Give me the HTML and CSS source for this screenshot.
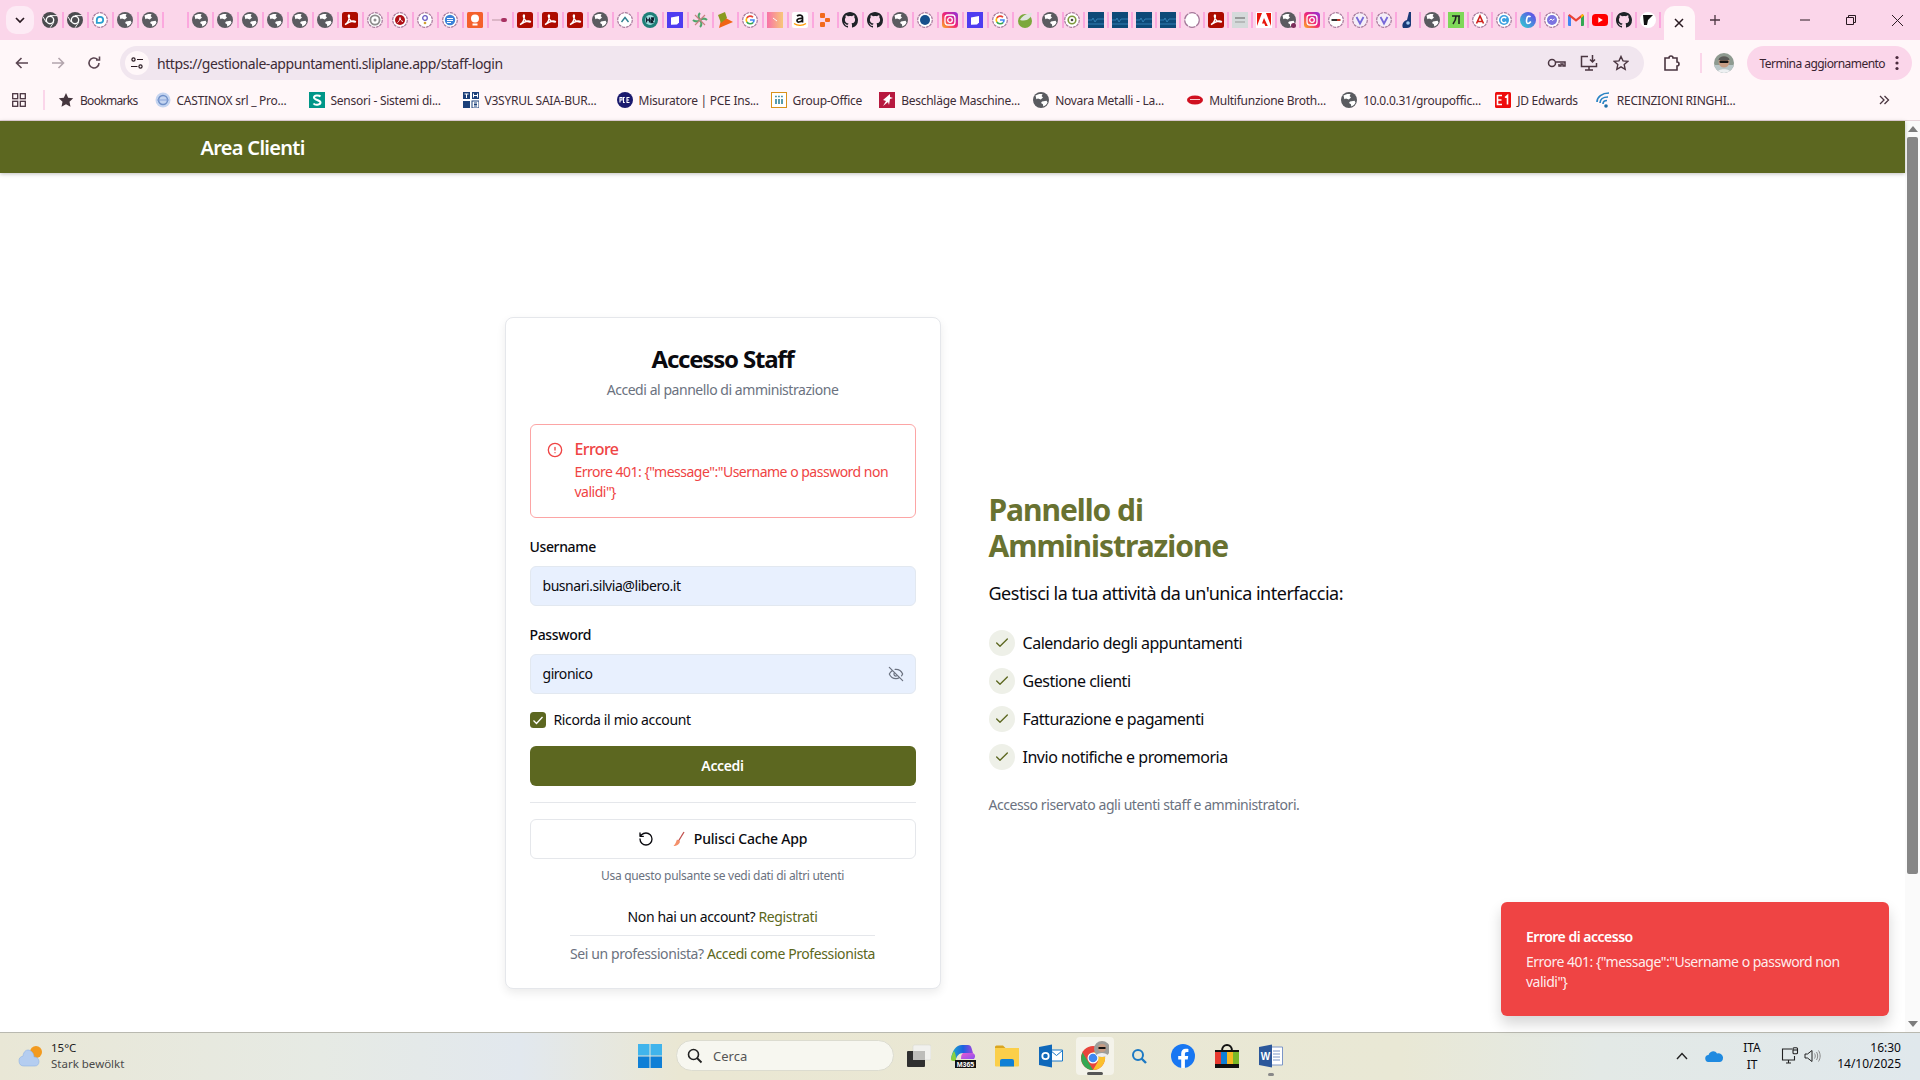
FILE: index.html
```html
<!DOCTYPE html>
<html lang="it">
<head>
    <meta charset="UTF-8">
    <title>Accesso Staff</title>
    <link rel="stylesheet" href="styles.css">
</head>
<body>
    <!-- favicons used by tab strip and bookmarks -->
    <svg class="sprite" xmlns="http://www.w3.org/2000/svg">
        <symbol id="f-globe" viewBox="0 0 16 16"><circle cx="8" cy="8" r="8" fill="#5a5b60"/><path fill="#fff" d="M2.5 3.6C4.6 2 7.2 1.5 9.6 2.2L8.6 4 10 5.6 7.8 7.4 5 6.4 3.4 7.2zM9 9.4l4.6-.6.9 1.6c-.7 1.8-2.2 3.3-4.2 4l-.4-2.2L8 11z"/></symbol>
        <symbol id="f-chrome" viewBox="0 0 16 16"><circle cx="8" cy="8" r="8" fill="#4b4b4f"/><circle cx="8" cy="8" r="4.4" fill="#fff"/><circle cx="8" cy="8" r="3" fill="#4b4b4f"/><path stroke="#fff" stroke-width=".9" d="M8 3.6h7M4.2 10.2.9 4.6M11.8 10.2 8 15.8"/></symbol>
        <symbol id="f-pdf" viewBox="0 0 16 16"><rect width="16" height="16" rx="2.5" fill="#ad0b00"/><path fill="none" stroke="#fff" stroke-width="1.4" d="M3 12.6c2.4-1.4 4.2-4.6 4.4-8.6.1-1.600-1.300-1.400-1 .3.500 3 2.900 5.500 6.600 5.700 1.300 0-.1-1.500-2.300-1-2.400.5-4.800 1.600-7.700 3.600z"/></symbol>
        <symbol id="f-ring-blue" viewBox="0 0 16 16"><circle cx="8" cy="8" r="7.300" fill="#fff" stroke="#a5799a" stroke-width="1.200" stroke-dasharray="3 .8"/><path fill="none" stroke="#2a9fd0" stroke-width="1.800" d="M4.800 10.800V8a3.200 3.200 0 1 1 6.400 0c0 2-1.500 2.800-3.200 2.800z"/></symbol>
        <symbol id="f-ring-gray" viewBox="0 0 16 16"><circle cx="8" cy="8" r="7.300" fill="#fff" stroke="#a5799a" stroke-width="1.200" stroke-dasharray="3 .8"/><circle cx="8" cy="8" r="4.600" fill="none" stroke="#8d8d8d" stroke-width="1.800"/><circle cx="8" cy="8" r="1.500" fill="#8d8d8d"/></symbol>
        <symbol id="f-ring-red" viewBox="0 0 16 16"><circle cx="8" cy="8" r="7.300" fill="#fff" stroke="#a5799a" stroke-width="1.200" stroke-dasharray="3 .8"/><circle cx="8" cy="8" r="5" fill="#b01016"/><path fill="none" stroke="#fff" d="M5.500 10.500C7 9.500 8 7.500 8 5.500c0 2 1.200 3.600 3 4"/></symbol>
        <symbol id="f-ring-purple" viewBox="0 0 16 16"><circle cx="8" cy="8" r="7.300" fill="#fff" stroke="#a5799a" stroke-width="1.200" stroke-dasharray="3 .8"/><circle cx="8" cy="6" r="2.300" fill="none" stroke="#6a5bc0" stroke-width="1.300"/><circle cx="8" cy="11" r="1.300" fill="#d0a030"/></symbol>
        <symbol id="f-ring-lines" viewBox="0 0 16 16"><circle cx="8" cy="8" r="7.300" fill="#fff" stroke="#a5799a" stroke-width="1.200" stroke-dasharray="3 .8"/><circle cx="8" cy="8" r="5.200" fill="#3b82d8"/><path stroke="#fff" d="M5 6.500h6M5 8.500h6M5 10.500h4"/></symbol>
        <symbol id="f-lamp" viewBox="0 0 16 16"><rect width="16" height="16" rx="1.500" fill="#f4602c"/><circle cx="8" cy="6.500" r="4" fill="#fff"/><rect x="5.500" y="11.500" width="5" height="2" fill="#fff"/></symbol>
        <symbol id="f-dash" viewBox="0 0 16 16"><path stroke="#c9a0b0" stroke-width="1.200" d="M0 8h9"/><rect x="9" y="6" width="6" height="4" rx="2" fill="#a83262"/></symbol>
        <symbol id="f-ring-teal" viewBox="0 0 16 16"><circle cx="8" cy="8" r="7.300" fill="#fff" stroke="#a5799a" stroke-width="1.200" stroke-dasharray="3 .8"/><path fill="none" stroke="#2f7f90" stroke-width="1.400" d="M4.500 10 8 5.500l3.500 4.500"/></symbol>
        <symbol id="f-h2" viewBox="0 0 16 16"><circle cx="8" cy="8" r="8" fill="#1f7f78"/><circle cx="8" cy="8" r="5" fill="#9fdfe0"/><path stroke="#123" stroke-width="1.300" d="M4.500 5.500v5M7.500 5.500v5M4.500 8h3M9 6h2.500v2H9v2.500h2.500"/></symbol>
        <symbol id="f-note" viewBox="0 0 16 16"><rect width="16" height="16" fill="#4f3df0"/><path fill="#fff" d="M4 5.500 12 4v6.500l-2 2-6 .3z"/></symbol>
        <symbol id="f-wheel" viewBox="0 0 16 16"><g fill="none" stroke="#4fa56b" stroke-width="2"><path d="M8 8C6 5 6 3 8 1M8 8c3-2 5-2 7 0M8 8c2 3 2 5 0 7M8 8C5 10 3 10 1 8"/></g><g fill="none" stroke="#c98080" stroke-width="1.200"><path d="M8 8 3 3M8 8l5-5M8 8l5 5M8 8l-5 5"/></g></symbol>
        <symbol id="f-orange" viewBox="0 0 16 16"><path fill="#f06414" d="M5 4 16 10 2 16z"/><path fill="#8a9a20" d="M1 3 8 0l2 6-6 5z"/></symbol>
        <symbol id="f-g" viewBox="0 0 16 16"><circle cx="8" cy="8" r="7.300" fill="#fff" stroke="#a5799a" stroke-width="1.200" stroke-dasharray="3 .8"/><path fill="none" stroke="#ea4335" stroke-width="1.600" d="M11 5.300A4 4 0 0 0 4.800 6"/><path fill="none" stroke="#fbbc05" stroke-width="1.600" d="M4.800 6a4 4 0 0 0 0 4"/><path fill="none" stroke="#34a853" stroke-width="1.600" d="M4.800 10a4 4 0 0 0 6.400.4"/><path fill="none" stroke="#4285f4" stroke-width="1.600" d="M11.200 10.400A4 4 0 0 0 12 8H8"/></symbol>
        <symbol id="f-pink" viewBox="0 0 16 16"><defs><linearGradient id="g-pink" x1="0" y1="0" x2="1" y2="0"><stop offset="0" stop-color="#f872a8"/><stop offset="1" stop-color="#f8c878"/></linearGradient></defs><rect width="16" height="16" fill="url(#g-pink)"/><path stroke="#fff" d="M6 6l4 3"/></symbol>
        <symbol id="f-dots" viewBox="0 0 16 16"><g fill="#f26b1d"><rect x="3" y="1" width="5" height="5" rx="1"/><rect x="8" y="6" width="5" height="4" rx="1"/><rect x="3" y="10" width="5" height="5" rx="1"/></g></symbol>
        <symbol id="f-github" viewBox="0 0 16 16"><path fill="#1f2328" d="M8 0C3.580 0 0 3.580 0 8c0 3.540 2.290 6.530 5.470 7.590.4.070.55-.17.55-.38v-1.340c-2.230.48-2.700-1.070-2.700-1.070-.36-.92-.89-1.170-.89-1.170-.73-.5.050-.49.050-.49.8.060 1.230.83 1.230.83.710 1.220 1.870.87 2.330.66.070-.52.280-.87.510-1.070-1.780-.2-3.640-.89-3.640-3.950 0-.87.31-1.590.82-2.150-.08-.2-.36-1.020.08-2.120 0 0 .67-.21 2.200.82A7.600 7.600 0 0 1 8 3.900c.68 0 1.360.09 2 .27 1.530-1.040 2.200-.82 2.200-.82.44 1.100.16 1.920.08 2.120.51.560.82 1.270.82 2.150 0 3.070-1.870 3.750-3.650 3.950.29.250.54.730.54 1.480v2.160c0 .21.150.46.550.38A8.010 8.010 0 0 0 16 8c0-4.420-3.580-8-8-8z"/></symbol>
        <symbol id="f-ring-navy" viewBox="0 0 16 16"><circle cx="8" cy="8" r="7.300" fill="#fff" stroke="#a5799a" stroke-width="1.200" stroke-dasharray="3 .8"/><circle cx="8" cy="8" r="5" fill="#16508c"/></symbol>
        <symbol id="f-insta" viewBox="0 0 16 16"><defs><linearGradient id="g-insta" x1="0" y1="1" x2="1" y2="0"><stop offset="0" stop-color="#fdb01e"/><stop offset=".5" stop-color="#f0257a"/><stop offset="1" stop-color="#8a32e0"/></linearGradient></defs><rect width="16" height="16" rx="3.500" fill="url(#g-insta)"/><rect x="3" y="3" width="10" height="10" rx="3" fill="none" stroke="#fff" stroke-width="1.300"/><circle cx="8" cy="8" r="2.300" fill="none" stroke="#fff" stroke-width="1.300"/></symbol>
        <symbol id="f-blob" viewBox="0 0 16 16"><circle cx="8" cy="9" r="7" fill="#7ca83c"/><path fill="#dfe5df" d="M3 8c2-4 7-7 12-7-1 5-5 9-12 7z"/></symbol>
        <symbol id="f-ring-green" viewBox="0 0 16 16"><circle cx="8" cy="8" r="7.300" fill="#fff" stroke="#a5799a" stroke-width="1.200" stroke-dasharray="3 .8"/><circle cx="8" cy="8" r="3.800" fill="none" stroke="#7c9a3c" stroke-width="1.600"/><circle cx="8" cy="8" r="1.300" fill="#444"/></symbol>
        <symbol id="f-tile" viewBox="0 0 16 16"><rect width="16" height="16" fill="#0d4a78"/><path fill="none" stroke="#3a8cc0" stroke-width=".8" d="M0 8h4l1-2 2 4 2-3h7M0 12h16"/></symbol>
        <symbol id="f-ring-empty" viewBox="0 0 16 16"><circle cx="8" cy="8" r="7.300" fill="#fff" stroke="#a5799a" stroke-width="1.200" stroke-dasharray="7 .8"/></symbol>
        <symbol id="f-oslo" viewBox="0 0 16 16"><rect width="16" height="16" fill="#d5dadb"/><path stroke="#777" stroke-width="1.300" d="M3 6h10"/><path stroke="#999" d="M3 10h10"/></symbol>
        <symbol id="f-adobe" viewBox="0 0 16 16"><rect width="16" height="16" fill="#fff"/><path fill="#e8160c" d="M1 1h5L1 14zM10 1h5v13zM8 6l3.800 8H9.300l-1-2.600H6z"/></symbol>
        <symbol id="f-globe-dot" viewBox="0 0 16 16"><use href="#f-globe"/><circle cx="13.500" cy="13.500" r="2.500" fill="#7b2d5b"/></symbol>
        <symbol id="f-ring-dash" viewBox="0 0 16 16"><circle cx="8" cy="8" r="7.300" fill="#fff" stroke="#a5799a" stroke-width="1.200" stroke-dasharray="3 .8"/><path stroke="#333" stroke-width="2" d="M3.500 8H9"/><path stroke="#c0392b" stroke-width="2" d="M9 8h3.500"/></symbol>
        <symbol id="f-ring-v" viewBox="0 0 16 16"><circle cx="8" cy="8" r="7.300" fill="#f5eef8" stroke="#a5799a" stroke-width="1.200" stroke-dasharray="3 .8"/><path fill="none" stroke="#7668d8" stroke-width="1.800" d="M4.500 5 8 11.500 11.500 5"/></symbol>
        <symbol id="f-tune" viewBox="0 0 16 16"><path fill="#1a3a78" d="M3 16c-1.500-3 0-7 4-8l2-8h2v13c0 2-2 3-4 3z"/><circle cx="8" cy="11" r="1.800" fill="#9fc8f0"/></symbol>
        <symbol id="f-green" viewBox="0 0 16 16"><rect width="16" height="16" fill="#7fd858"/><path fill="none" stroke="#222" stroke-width="1.600" d="M4 4h8M8 4c0 3-1.500 6-3 8M11 4v8"/></symbol>
        <symbol id="f-ring-adobe" viewBox="0 0 16 16"><circle cx="8" cy="8" r="7.300" fill="#fff" stroke="#a5799a" stroke-width="1.200" stroke-dasharray="3 .8"/><path fill="none" stroke="#d0211c" stroke-width="1.600" d="M4.500 11.500 8 4l3.500 7.500M6 9.500h4"/></symbol>
        <symbol id="f-ring-c" viewBox="0 0 16 16"><circle cx="8" cy="8" r="7.300" fill="#fff" stroke="#a5799a" stroke-width="1.200" stroke-dasharray="3 .8"/><circle cx="8" cy="8" r="5" fill="#3aa0e0"/><path fill="none" stroke="#fff" stroke-width="1.400" d="M10.200 6.200a2.800 2.800 0 1 0 0 3.600"/></symbol>
        <symbol id="f-canva" viewBox="0 0 16 16"><defs><linearGradient id="g-canva" x1="0" y1="1" x2="1" y2="0"><stop offset="0" stop-color="#2bd4d0"/><stop offset="1" stop-color="#6a3ce8"/></linearGradient></defs><circle cx="8" cy="8" r="8" fill="url(#g-canva)"/><path fill="none" stroke="#fff" stroke-width="1.600" d="M10.500 5a2 2 0 0 0-3.500 1c-1 3-.5 5.500 1 5.500 1 0 2-.8 2.800-2"/></symbol>
        <symbol id="f-ring-msg" viewBox="0 0 16 16"><circle cx="8" cy="8" r="7.300" fill="#fff" stroke="#a5799a" stroke-width="1.200" stroke-dasharray="3 .8"/><circle cx="8" cy="8" r="5" fill="#7c74e0"/><path fill="none" stroke="#fff" d="M5.500 8.500 7 7l1.500 1.300L10.500 7"/></symbol>
        <symbol id="f-gmail" viewBox="0 0 16 16"><path fill="#4285f4" d="M0 3.500h3V14H1a1 1 0 0 1-1-1z"/><path fill="#34a853" d="M13 3.500h3V13a1 1 0 0 1-1 1h-2z"/><path fill="#ea4335" d="M0 3.500 1.500 2 8 7l6.500-5L16 3.500 8 9.800z"/><path fill="#fbbc05" d="M13 3.300 14.500 2 16 3.500 13 6z"/></symbol>
        <symbol id="f-yt" viewBox="0 0 16 16"><rect y="2" width="16" height="12" rx="3.500" fill="#f00"/><path fill="#fff" d="m6.300 5.300 4.500 2.700-4.500 2.700z"/></symbol>
        <symbol id="f-black" viewBox="0 0 16 16"><circle cx="8" cy="8" r="8" fill="#fff"/><path fill="#111" d="M3 3h10L8 8l-1 5H4z"/></symbol>
        <symbol id="f-castinox" viewBox="0 0 16 16"><circle cx="8" cy="8" r="7.500" fill="#c4d4f0"/><circle cx="8" cy="8" r="4.500" fill="none" stroke="#7090c8" stroke-width="1.500"/><path stroke="#8aa4d8" d="M2 8h12"/></symbol>
        <symbol id="f-the" viewBox="0 0 16 16"><rect width="16" height="16" fill="#fff"/><path fill="#1b3f7a" d="M0 0h7v7H0zM9 0h7v7H9zM0 9h7v7H0z"/><rect x="9" y="9" width="7" height="7" fill="none" stroke="#1b3f7a"/><path stroke="#fff" d="M1.500 2h4M3.500 2v4M10.500 1.500v4M14.500 1.500v4M10.500 3.500h4"/><path stroke="#1b3f7a" d="M11 11h3M11 12.500h3M11 14h3"/></symbol>
        <symbol id="f-pce" viewBox="0 0 16 16"><circle cx="8" cy="8" r="8" fill="#1a1a6e"/><path stroke="#fff" stroke-width="1.100" fill="none" d="M3 10.500V5.500h2v2.500H3M7.800 5.500H6.500v5h1.300M12.500 5.500h-2.500v5h2.500M10 8h2"/></symbol>
        <symbol id="f-group" viewBox="0 0 16 16"><rect x=".5" y=".5" width="15" height="15" fill="#fff" stroke="#d8921c"/><path stroke="#1f7c94" stroke-width="1.500" d="M5 7v5M8 7v5M11 7v5"/><path stroke="#1f7c94" stroke-width="1.500" stroke-dasharray="1.500 1.500" d="M4.200 4.500h7.600"/></symbol>
        <symbol id="f-besch" viewBox="0 0 16 16"><rect width="16" height="16" fill="#b7193f"/><path fill="#fff" d="m11 2-7 6 3 1-3 5 5-4 1 3 1-6 3-1-3-1z"/></symbol>
        <symbol id="f-multi" viewBox="0 0 16 16"><ellipse cx="8" cy="8" rx="8" ry="4.500" fill="#d01020"/><path stroke="#fff" stroke-width=".8" d="M3 7.500h10"/></symbol>
        <symbol id="f-e1" viewBox="0 0 16 16"><rect width="16" height="16" rx="1.500" fill="#ee0c0c"/><path fill="none" stroke="#fff" stroke-width="1.600" d="M7 3.500H2.500v9H7M2.500 8h4M10 5.500l2.500-2v9"/></symbol>
        <symbol id="f-swirl" viewBox="0 0 16 16"><g fill="none" stroke="#2a84c4" stroke-width="1.700"><path d="M2 10C2 5 7 1 14 1M5 11c0-3.500 3-6 8-6M8 12c0-2 1.500-3.500 4-3.500"/></g><circle cx="11" cy="14" r="1.800" fill="#1f6fa8"/></symbol>
    </svg>

    <div class="tabstrip">
        <button class="tab-search"><svg viewBox="0 0 12 12" width="12" height="12"><path d="M2 4l4 4 4-4" fill="none" stroke="#2a1a22" stroke-width="1.700"/></svg></button>
        <div class="tabs">
            <span class="tab"><svg class="fav"><use href="#f-chrome"/></svg></span>
            <span class="tab"><svg class="fav"><use href="#f-chrome"/></svg></span>
            <span class="tab"><svg class="fav"><use href="#f-ring-blue"/></svg></span>
            <span class="tab"><svg class="fav"><use href="#f-globe"/></svg></span>
            <span class="tab"><svg class="fav"><use href="#f-globe"/></svg></span>
            <span class="tab"></span>
            <span class="tab"><svg class="fav"><use href="#f-globe"/></svg></span>
            <span class="tab"><svg class="fav"><use href="#f-globe"/></svg></span>
            <span class="tab"><svg class="fav"><use href="#f-globe"/></svg></span>
            <span class="tab"><svg class="fav"><use href="#f-globe"/></svg></span>
            <span class="tab"><svg class="fav"><use href="#f-globe"/></svg></span>
            <span class="tab"><svg class="fav"><use href="#f-globe"/></svg></span>
            <span class="tab"><svg class="fav"><use href="#f-pdf"/></svg></span>
            <span class="tab"><svg class="fav"><use href="#f-ring-gray"/></svg></span>
            <span class="tab"><svg class="fav"><use href="#f-ring-red"/></svg></span>
            <span class="tab"><svg class="fav"><use href="#f-ring-purple"/></svg></span>
            <span class="tab"><svg class="fav"><use href="#f-ring-lines"/></svg></span>
            <span class="tab"><svg class="fav"><use href="#f-lamp"/></svg></span>
            <span class="tab"><svg class="fav"><use href="#f-dash"/></svg></span>
            <span class="tab"><svg class="fav"><use href="#f-pdf"/></svg></span>
            <span class="tab"><svg class="fav"><use href="#f-pdf"/></svg></span>
            <span class="tab"><svg class="fav"><use href="#f-pdf"/></svg></span>
            <span class="tab"><svg class="fav"><use href="#f-globe"/></svg></span>
            <span class="tab"><svg class="fav"><use href="#f-ring-teal"/></svg></span>
            <span class="tab"><svg class="fav"><use href="#f-h2"/></svg></span>
            <span class="tab"><svg class="fav"><use href="#f-note"/></svg></span>
            <span class="tab"><svg class="fav"><use href="#f-wheel"/></svg></span>
            <span class="tab"><svg class="fav"><use href="#f-orange"/></svg></span>
            <span class="tab"><svg class="fav"><use href="#f-g"/></svg></span>
            <span class="tab"><svg class="fav"><use href="#f-pink"/></svg></span>
            <span class="tab"><svg class="fav" viewBox="0 0 16 16"><rect width="16" height="16" rx="2" fill="#fff"/><path fill="none" stroke="#111" stroke-width="1.700" d="M5 4.200c1.500-1.500 5-1.500 5.500.8v5.500M10.500 6.500c-3-.2-5.500.2-5.500 2.100s3.500 2 5.500-.3"/><path fill="none" stroke="#f90" stroke-width="1.300" d="M2 11.500c3.500 2.500 8.500 2.500 12 0"/></svg></span>
            <span class="tab"><svg class="fav"><use href="#f-dots"/></svg></span>
            <span class="tab"><svg class="fav"><use href="#f-github"/></svg></span>
            <span class="tab"><svg class="fav"><use href="#f-github"/></svg></span>
            <span class="tab"><svg class="fav"><use href="#f-globe"/></svg></span>
            <span class="tab"><svg class="fav"><use href="#f-ring-navy"/></svg></span>
            <span class="tab"><svg class="fav"><use href="#f-insta"/></svg></span>
            <span class="tab"><svg class="fav"><use href="#f-note"/></svg></span>
            <span class="tab"><svg class="fav"><use href="#f-g"/></svg></span>
            <span class="tab"><svg class="fav"><use href="#f-blob"/></svg></span>
            <span class="tab"><svg class="fav"><use href="#f-globe"/></svg></span>
            <span class="tab tab-small"><svg class="fav"><use href="#f-ring-green"/></svg></span>
            <span class="tab tab-small"><svg class="fav"><use href="#f-tile"/></svg></span>
            <span class="tab tab-small"><svg class="fav"><use href="#f-tile"/></svg></span>
            <span class="tab tab-small"><svg class="fav"><use href="#f-tile"/></svg></span>
            <span class="tab tab-small"><svg class="fav"><use href="#f-tile"/></svg></span>
            <span class="tab tab-small"><svg class="fav"><use href="#f-ring-empty"/></svg></span>
            <span class="tab tab-small"><svg class="fav"><use href="#f-pdf"/></svg></span>
            <span class="tab tab-small"><svg class="fav"><use href="#f-oslo"/></svg></span>
            <span class="tab tab-small"><svg class="fav"><use href="#f-adobe"/></svg></span>
            <span class="tab tab-small"><svg class="fav"><use href="#f-globe-dot"/></svg></span>
            <span class="tab tab-small"><svg class="fav"><use href="#f-insta"/></svg></span>
            <span class="tab tab-small"><svg class="fav"><use href="#f-ring-dash"/></svg></span>
            <span class="tab tab-small"><svg class="fav"><use href="#f-ring-v"/></svg></span>
            <span class="tab tab-small"><svg class="fav"><use href="#f-ring-v"/></svg></span>
            <span class="tab tab-small"><svg class="fav"><use href="#f-tune"/></svg></span>
            <span class="tab tab-small"><svg class="fav"><use href="#f-globe"/></svg></span>
            <span class="tab tab-small"><svg class="fav"><use href="#f-green"/></svg></span>
            <span class="tab tab-small"><svg class="fav"><use href="#f-ring-adobe"/></svg></span>
            <span class="tab tab-small"><svg class="fav"><use href="#f-ring-c"/></svg></span>
            <span class="tab tab-small"><svg class="fav"><use href="#f-canva"/></svg></span>
            <span class="tab tab-small"><svg class="fav"><use href="#f-ring-msg"/></svg></span>
            <span class="tab tab-small"><svg class="fav"><use href="#f-gmail"/></svg></span>
            <span class="tab tab-small"><svg class="fav"><use href="#f-yt"/></svg></span>
            <span class="tab tab-small"><svg class="fav"><use href="#f-github"/></svg></span>
            <span class="tab tab-small"><svg class="fav"><use href="#f-black"/></svg></span>
        </div>
        <div class="tab-active"><svg viewBox="0 0 10 10" width="10" height="10"><path d="M1 1l8 8M9 1l-8 8" stroke="#2a1a22" stroke-width="1.500"/></svg></div>
        <svg class="tab-new" viewBox="0 0 12 12" width="12" height="12"><path d="M6 1v10M1 6h10" stroke="#4a3540" stroke-width="1.300"/></svg>
        <div class="win-controls">
            <span><svg viewBox="0 0 10 10" width="10" height="10"><path d="M0 5h10" stroke="#2a1a22"/></svg></span>
            <span><svg viewBox="0 0 10 10" width="10" height="10"><path d="M.5 2.500h7v7h-7zM2.500 2.500v-2h7v7h-2" fill="none" stroke="#2a1a22"/></svg></span>
            <span><svg viewBox="0 0 10 10" width="11" height="11"><path d="M0 0l10 10M10 0L0 10" stroke="#2a1a22" stroke-width=".9"/></svg></span>
        </div>
    </div>

    <div class="toolbar">
        <span class="tool-btn"><svg viewBox="0 0 16 16" width="16" height="16"><path d="M14 8H2.500M7.500 3l-5 5 5 5" fill="none" stroke="#5b4652" stroke-width="1.600"/></svg></span>
        <span class="tool-btn"><svg viewBox="0 0 16 16" width="16" height="16"><path d="M2 8h11.500M8.500 3l5 5-5 5" fill="none" stroke="#b3a5ad" stroke-width="1.600"/></svg></span>
        <span class="tool-btn"><svg viewBox="0 0 16 16" width="16" height="16"><path d="M13 8a5 5 0 1 1-1.600-3.700M13.500 1.500v3.500H10" fill="none" stroke="#5b4652" stroke-width="1.600"/></svg></span>
        <div class="omnibox">
            <span class="site-info"><svg viewBox="0 0 14 14" width="14" height="14"><g fill="none" stroke="#2a1a22" stroke-width="1.200"><circle cx="3.500" cy="3.500" r="1.600"/><circle cx="10.500" cy="10.500" r="1.600"/><path d="M7 3.500h6M1 10.500h6.500"/></g></svg></span>
            <span class="url">https://gestionale-appuntamenti.sliplane.app/staff-login</span>
            <svg class="omni-icon" viewBox="0 0 20 14" width="20" height="14"><g fill="none" stroke="#4a3540" stroke-width="1.500"><circle cx="5" cy="7" r="3.500"/><path d="M8.500 6h9.500v4h-2V8h-2v2h-2V8"/></g></svg>
            <svg class="omni-icon" viewBox="0 0 18 18" width="18" height="18"><g fill="none" stroke="#4a3540" stroke-width="1.500"><path d="M8 2.500H1.500v10h15V9M5 16h8M9 12.500V16M12.500 1v6.500M10 5.500l2.500 2.500L15 5.500"/></g></svg>
            <svg class="omni-icon omni-star" viewBox="0 0 16 16" width="16" height="16"><path d="M8 1.500l2 4.400 4.700.5-3.500 3.200 1 4.700L8 11.900l-4.200 2.400 1-4.700L1.300 6.400 6 5.900z" fill="none" stroke="#4a3540" stroke-width="1.400"/></svg>
        </div>
        <span class="ext-btn"><svg viewBox="0 0 18 18" width="18" height="18"><path d="M2 4h4a2 2 0 0 1 4 0h4v4a2 2 0 0 1 0 4v4H2z" fill="none" stroke="#4a3540" stroke-width="1.600"/></svg></span>
        <span class="tool-sep"></span>
        <svg class="avatar" viewBox="0 0 20 20" width="20" height="20"><clipPath id="avatar-clip"><circle cx="10" cy="10" r="10"/></clipPath><g clip-path="url(#avatar-clip)"><rect width="20" height="20" fill="#8e9a90"/><path fill="#b9c6c8" d="M0 12h20v8H0z"/><circle cx="10" cy="9" r="5.500" fill="#c59c84"/><path fill="#5a5a58" d="M4.500 7C5 2 15 2 15.500 7z"/><rect x="5.500" y="7.500" width="9" height="2.500" rx="1" fill="#111"/><path fill="#eef0f2" d="M3 20c0-5 14-5 14 0z"/></g></svg>
        <span class="update-pill">Termina aggiornamento<svg viewBox="0 0 4 16" width="4" height="16"><g fill="#4a2a3c"><circle cx="2" cy="2.500" r="1.600"/><circle cx="2" cy="8" r="1.600"/><circle cx="2" cy="13.500" r="1.600"/></g></svg></span>
    </div>

    <div class="bookmarks">
        <span class="apps-btn"><svg viewBox="0 0 14 14" width="14" height="14"><g fill="none" stroke="#4a3540" stroke-width="1.300"><rect x=".7" y=".7" width="5" height="5"/><rect x="8.300" y=".7" width="5" height="5"/><rect x=".7" y="8.300" width="5" height="5"/><rect x="8.300" y="8.300" width="5" height="5"/></g></svg></span>
        <span class="tool-sep bm-sep"></span>
        <span class="bm bm-folder"><svg class="fav" viewBox="0 0 16 16"><path fill="#45363e" d="M8 1l2.200 4.700 5 .6-3.700 3.400 1 5L8 12.200l-4.500 2.500 1-5L.8 6.300l5-.6z"/></svg>Bookmarks</span>
        <span class="bm bm-long"><svg class="fav"><use href="#f-castinox"/></svg>CASTINOX srl _ Pro...</span>
        <span class="bm bm-long"><svg class="fav" viewBox="0 0 16 16"><rect width="16" height="16" fill="#009688"/><path fill="none" stroke="#fff" stroke-width="2" d="M11.500 4.500C10 2.800 5 3 5 5.500S11.500 8 11.500 10.500 6 13.500 4.500 11.500"/></svg>Sensori - Sistemi di...</span>
        <span class="bm bm-long"><svg class="fav"><use href="#f-the"/></svg>V3SYRUL SAIA-BUR...</span>
        <span class="bm bm-long"><svg class="fav"><use href="#f-pce"/></svg>Misuratore | PCE Ins...</span>
        <span class="bm"><svg class="fav"><use href="#f-group"/></svg>Group-Office</span>
        <span class="bm bm-long"><svg class="fav"><use href="#f-besch"/></svg>Beschläge Maschine...</span>
        <span class="bm bm-long"><svg class="fav"><use href="#f-globe"/></svg>Novara Metalli - La...</span>
        <span class="bm bm-long"><svg class="fav"><use href="#f-multi"/></svg>Multifunzione Broth...</span>
        <span class="bm bm-long"><svg class="fav"><use href="#f-globe"/></svg>10.0.0.31/groupoffic...</span>
        <span class="bm"><svg class="fav"><use href="#f-e1"/></svg>JD Edwards</span>
        <span class="bm"><svg class="fav"><use href="#f-swirl"/></svg>RECINZIONI RINGHI...</span>
        <svg class="bm-more" viewBox="0 0 12 12" width="12" height="12"><path d="M2 2l4 4-4 4M6.500 2l4 4-4 4" fill="none" stroke="#4a3540" stroke-width="1.300"/></svg>
    </div>

    <div class="viewport">
        <div class="page">
            <header class="site-header">Area Clienti</header>
            <main class="login-grid">
                <section class="card">
                    <h1>Accesso Staff</h1>
                    <p class="subtitle">Accedi al pannello di amministrazione</p>

                    <div class="alert">
                        <svg class="icon" viewBox="0 0 24 24"><circle cx="12" cy="12" r="10"/><path d="M12 8v4M12 16h.01"/></svg>
                        <div>
                            <div class="alert-title">Errore</div>
                            <div class="alert-text">Errore 401: {"message":"Username o password non validi"}</div>
                        </div>
                    </div>

                    <label class="field-label">Username</label>
                    <div class="input">busnari.silvia@libero.it</div>

                    <label class="field-label field-gap">Password</label>
                    <div class="input">gironico
                        <svg class="icon eye" viewBox="0 0 24 24"><path d="M9.880 9.880a3 3 0 1 0 4.240 4.240M10.730 5.080A10.430 10.430 0 0 1 12 5c7 0 10 7 10 7a13.160 13.160 0 0 1-1.670 2.680M6.610 6.610A13.526 13.526 0 0 0 2 12s3 7 10 7a9.740 9.740 0 0 0 5.390-1.610M2 2l20 20"/></svg>
                    </div>

                    <div class="remember">
                        <span class="checkbox"><svg viewBox="0 0 16 16" width="16" height="16"><path d="M3.500 8.500l3 3 6-6.500" fill="none" stroke="#fff" stroke-width="1.300"/></svg></span>
                        Ricorda il mio account
                    </div>

                    <button class="btn-primary">Accedi</button>
                    <hr class="divider">

                    <button class="btn-outline">
                        <svg class="icon" viewBox="0 0 24 24"><path d="M3 12a9 9 0 1 0 9-9 9.750 9.750 0 0 0-6.740 2.740L3 8M3 3v5h5"/></svg>
                        <svg class="broom" viewBox="0 0 14 16" width="14" height="16"><path d="M12 1 6.500 10" stroke="#c0504d" stroke-width="1.300"/><path d="M5 8.500 8 10.500C7.500 13 5 15 1.500 15 3.500 13 4 11 5 8.500z" fill="#f4906a"/></svg>
                        Pulisci Cache App
                    </button>
                    <p class="hint">Usa questo pulsante se vedi dati di altri utenti</p>

                    <div class="links">
                        <p class="link-row">Non hai un account? <a>Registrati</a></p>
                        <p class="link-row link-muted">Sei un professionista? <a>Accedi come Professionista</a></p>
                    </div>
                </section>

                <section class="info">
                    <h2>Pannello di Amministrazione</h2>
                    <p class="info-lead">Gestisci la tua attività da un'unica interfaccia:</p>
                    <ul class="features">
                        <li><span class="tick"><svg class="icon" viewBox="0 0 24 24"><path d="M20 6 9 17l-5-5"/></svg></span>Calendario degli appuntamenti</li>
                        <li><span class="tick"><svg class="icon" viewBox="0 0 24 24"><path d="M20 6 9 17l-5-5"/></svg></span>Gestione clienti</li>
                        <li><span class="tick"><svg class="icon" viewBox="0 0 24 24"><path d="M20 6 9 17l-5-5"/></svg></span>Fatturazione e pagamenti</li>
                        <li><span class="tick"><svg class="icon" viewBox="0 0 24 24"><path d="M20 6 9 17l-5-5"/></svg></span>Invio notifiche e promemoria</li>
                    </ul>
                    <p class="info-note">Accesso riservato agli utenti staff e amministratori.</p>
                </section>
            </main>
            <div class="toast">
                <div class="toast-title">Errore di accesso</div>
                <div class="toast-text">Errore 401: {"message":"Username o password non validi"}</div>
            </div>
        </div>
        <div class="scrollbar">
            <svg viewBox="0 0 10 6" width="10" height="6"><path d="M5 0l5 6H0z" fill="#7c7c7c"/></svg>
            <div class="scroll-thumb"></div>
            <svg class="scroll-down" viewBox="0 0 10 6" width="10" height="6"><path d="M5 6l5-6H0z" fill="#7c7c7c"/></svg>
        </div>
    </div>

    <footer class="taskbar">
        <div class="weather">
            <svg viewBox="0 0 26 22" width="26" height="22"><circle cx="18" cy="7" r="6" fill="#f29a1f"/><path d="M6 21a5 5 0 0 1-1-9.900C5.500 6 9 4 12 5.500c3 1.500 4 4 4 6.500a4.500 4.500 0 0 1 5 4.500c0 3-2 4.500-4 4.500z" fill="#b4cdf0" stroke="#8fb2e4" stroke-width=".6"/></svg>
            <div><div>15°C</div><div class="weather-sub">Stark bewölkt</div></div>
        </div>
        <span class="task-app"><svg viewBox="0 0 24 24" width="24" height="24"><path fill="#40b4ec" d="M0 0h11.500v11.500H0zM12.500 0H24v11.500H12.500z"/><path fill="#0f7fd6" d="M0 12.500h11.500V24H0zM12.500 12.500H24V24H12.500z"/></svg></span>
        <div class="task-search"><svg viewBox="0 0 16 16" width="16" height="16"><circle cx="6.500" cy="6.500" r="5" fill="none" stroke="#222" stroke-width="1.600"/><path d="M10 10l4.500 4.500" stroke="#222" stroke-width="1.800"/></svg>Cerca</div>
        <span class="task-app task-first"><svg viewBox="0 0 24 24" width="24" height="24"><rect x="6" y="1" width="18" height="15" rx="1.500" fill="#f1f1ee" stroke="#d8d8d4" stroke-width=".6"/><rect x="0" y="7" width="18" height="16" rx="1" fill="#2f2f2f"/><path d="M6 7h12v9H6z" fill="#bdbdba"/></svg></span>
        <span class="task-app"><svg viewBox="0 0 26 24" width="26" height="24"><defs><linearGradient id="g-m365" x1="0" y1="0" x2="1" y2="0"><stop offset="0" stop-color="#1fb0c8"/><stop offset=".55" stop-color="#1a62e0"/><stop offset="1" stop-color="#a044e0"/></linearGradient><linearGradient id="g-m365b" x1="0" y1="0" x2="1" y2="1"><stop offset="0" stop-color="#e85ad0"/><stop offset="1" stop-color="#8a50f0"/></linearGradient></defs><path fill="url(#g-m365)" d="M1 15C2 7 6 1 12 1h6c2 0 3 1 3.500 3L23 9H13c-4 0-6 3-7 6z"/><path fill="#8ad040" d="M1 15c.5-3 1.500-6 3-8 1 2 2 4 2 8v2H3c-1.500 0-2-1-2-2z"/><path fill="url(#g-m365b)" d="M13 9h9c2 0 3.500 2 3 4l-1 2H11c0-3 .5-5 2-6z"/><rect x="5" y="16" width="21" height="8" fill="#111"/><text x="15.500" y="23" text-anchor="middle" font-family="Liberation Sans" font-size="7" font-weight="700" fill="#fff">M365</text></svg></span>
        <span class="task-app"><svg viewBox="0 0 24 22" width="24" height="22"><path fill="#d9a520" d="M0 2a1.500 1.500 0 0 1 1.500-1.500H8L10.500 3H0z"/><path fill="#fbcf4a" d="M0 3h24v17.500a1 1 0 0 1-1 1H1a1 1 0 0 1-1-1z"/><path fill="#0f80d6" d="M7 14h10a2 2 0 0 1 2 2v5.500H5V16a2 2 0 0 1 2-2z"/></svg></span>
        <span class="task-app"><svg viewBox="0 0 24 24" width="24" height="24"><path fill="#fff" stroke="#1a78c8" d="M11 6h12.500v11H11z"/><path fill="none" stroke="#1a78c8" d="M11.500 6.500l6 5 6-5"/><path fill="#0f68ba" d="M0 3l13-2.500v23L0 21z"/><circle cx="6.500" cy="12" r="3.200" fill="none" stroke="#fff" stroke-width="1.800"/></svg></span>
        <span class="task-app task-active"><svg viewBox="0 0 28 30" width="28" height="30"><circle cx="12" cy="17" r="12" fill="#e8453c"/><path fill="#34a853" d="M1.500 11.500 7 20.500l5 8.500a12 12 0 0 1-10.500-17.500z"/><path fill="#fbc02d" d="M12 11h10.500A12 12 0 0 1 12 29l5-8.500z"/><circle cx="12" cy="17" r="5.500" fill="#fff"/><circle cx="12" cy="17" r="4.300" fill="#3f87f0"/><circle cx="21" cy="8" r="8" fill="#9d9d99"/><circle cx="21" cy="7" r="4" fill="#c59c84"/><rect x="17.500" y="6" width="7" height="2" fill="#111"/><path fill="#eee" d="M15 15c1-4 11-4 12 0l-6 1z"/></svg></span>
        <span class="task-app"><svg viewBox="0 0 16 16" width="16" height="16"><circle cx="7" cy="7" r="5" fill="none" stroke="#1c79c4" stroke-width="2"/><path d="M10.500 10.500l4.500 4.500" stroke="#1c79c4" stroke-width="2.400"/></svg></span>
        <span class="task-app"><svg viewBox="0 0 24 24" width="24" height="24"><circle cx="12" cy="12" r="12" fill="#1877f2"/><path fill="#fff" d="M16.700 15.500l.5-3.500h-3.300V9.800c0-1 .5-1.900 2-1.900h1.500V4.900s-1.400-.2-2.700-.2c-2.700 0-4.500 1.700-4.500 4.600V12h-3v3.500h3V24h3.700v-8.500z"/></svg></span>
        <span class="task-app"><svg viewBox="0 0 24 24" width="24" height="24"><path d="M7 7c0-8 10-8 10 0" fill="none" stroke="#111" stroke-width="2"/><path fill="#111" d="M0 6h24v18H0z"/><path fill="#e83a30" d="M0 8h6v12H0z"/><path fill="#0f7fd6" d="M6 8h6v12H6z"/><path fill="#f8b820" d="M12 8h6v12h-6z"/><path fill="#7ab828" d="M18 8h6v12h-6z"/></svg></span>
        <span class="task-app task-open"><svg viewBox="0 0 24 24" width="24" height="24"><path fill="#fff" stroke="#7c96c8" d="M10 3h13.500v18H10z"/><path stroke="#7c96c8" d="M14 7h7M14 10h7M14 13h7M14 16h7"/><path fill="#2b579a" d="M0 3l13-2.500v23L0 21z"/><text x="6.500" y="16" text-anchor="middle" font-family="Liberation Sans" font-size="10" font-weight="700" fill="#fff">W</text></svg></span>
        <div class="tray">
            <span class="tray-item"><svg viewBox="0 0 12 8" width="12" height="8"><path d="M1 7l5-5.500L11 7" fill="none" stroke="#222" stroke-width="1.400"/></svg></span>
            <span class="tray-item"><svg viewBox="0 0 18 12" width="18" height="12"><path fill="#1f8ae0" d="M4 12a3.500 3.500 0 0 1-.5-7C5 1 10 0 12 3.500A4.500 4.500 0 0 1 18 8c0 2.500-1.500 4-3.500 4z"/></svg></span>
            <span class="tray-lang">ITA<br>IT</span>
            <span class="tray-item tray-net"><svg viewBox="0 0 18 18" width="18" height="18"><g fill="none" stroke="#222" stroke-width="1.100"><path d="M11 2H1.500v11h12V9M5 16h5M7.500 13v3"/><rect x="12" y=".8" width="4.500" height="6" rx="1"/><path d="M12 3h4.500"/></g></svg></span>
            <span class="tray-item tray-vol"><svg viewBox="0 0 18 14" width="18" height="14"><g fill="none" stroke="#222" stroke-width="1"><path d="M1 5h2.500L8 1.500v11L3.500 9H1z"/><path stroke="#8a8a8a" d="M10.500 4.500c1 1.500 1 3.500 0 5M12.500 3c1.600 2.500 1.600 5.500 0 8M14.500 1.500c2.200 3.500 2.200 7.500 0 11"/></g></svg></span>
            <span class="tray-clock">16:30<br>14/10/2025</span>
        </div>
    </footer>
</body>
</html>
```

FILE: styles.css
```css
* {
    box-sizing: border-box;
}
html, body {
    margin: 0;
    height: 1080px;
    overflow: hidden;
}
body {
    display: flex;
    flex-direction: column;
    font-family: "Noto Sans", "Open Sans", sans-serif;
    color: #0a0a0f;
    background: #fff;
}
.sprite {
    position: absolute;
    width: 0;
    height: 0;
}
.fav {
    width: 16px;
    height: 16px;
    flex: none;
}

/* browser tabs */
.tabstrip {
    display: flex;
    align-items: center;
    height: 40px;
    padding-left: 6px;
    background: #fbd6ea;
}
.tab-search {
    display: flex;
    align-items: center;
    justify-content: center;
    width: 28px;
    height: 28px;
    margin-right: 3.5px;
    padding: 0;
    border: 0;
    border-radius: 10px;
    background: #fdebf5;
}
.tabs {
    display: flex;
    align-items: center;
}
.tab {
    position: relative;
    display: flex;
    align-items: center;
    justify-content: center;
    width: 25px;
    height: 16px;
}
.tab-small {
    width: 24px;
}
.tab:not(.tab-small) + .tab-small {
    margin-left: -2.5px;
}
.tab::after {
    content: "";
    position: absolute;
    right: -1px;
    top: 0;
    width: 2px;
    height: 16px;
    background: #fba8de;
}
.tab-active {
    position: relative;
    display: flex;
    align-items: center;
    justify-content: center;
    align-self: flex-end;
    width: 31px;
    height: 34px;
    margin-left: 3.5px;
    border-radius: 10px 10px 0 0;
    background: #fff7f9;
}
.tab-new {
    margin-left: 14px;
}
.win-controls {
    display: flex;
    margin-left: auto;
}
.win-controls span {
    display: flex;
    align-items: center;
    justify-content: center;
    width: 46px;
    height: 32px;
}

/* toolbar */
.toolbar {
    display: flex;
    align-items: flex-end;
    height: 40px;
    padding-left: 4px;
    background: #fff7f9;
}
.tool-btn {
    display: flex;
    align-items: center;
    justify-content: center;
    width: 36px;
    height: 34px;
}
.omnibox {
    display: flex;
    align-items: center;
    width: 1524px;
    height: 34px;
    margin-left: 8px;
    padding: 0 15px 0 5px;
    border-radius: 17px;
    background: #f1e6ef;
}
.site-info {
    display: flex;
    align-items: center;
    justify-content: center;
    width: 24px;
    height: 24px;
    border-radius: 50%;
    background: #fff7f9;
}
.url {
    flex: 1;
    margin-left: 8px;
    font-size: 14px;
    letter-spacing: -.43px;
    color: #3d2c36;
}
.omni-icon {
    margin-left: 13px;
}
.omni-star {
    margin-left: 15px;
}
.ext-btn {
    display: flex;
    align-items: center;
    justify-content: center;
    width: 56px;
    height: 34px;
}
.tool-sep {
    width: 1.500px;
    height: 20px;
    margin-bottom: 7px;
    background: #fbd6ea;
}
.avatar {
    margin: 0 12px 7px 12px;
}
.update-pill {
    display: flex;
    align-items: center;
    justify-content: space-between;
    width: 165px;
    height: 34px;
    margin-left: 1px;
    padding: 0 13px;
    border-radius: 17px;
    font-size: 12px;
    letter-spacing: -.55px;
    white-space: nowrap;
    color: #3a2431;
    background: #fbd6ea;
}

/* bookmarks */
.bookmarks {
    display: flex;
    align-items: center;
    height: 41px;
    padding-left: 12px;
    border-bottom: 1px solid #e6d4da;
    background: #fff7f9;
}
.apps-btn {
    display: flex;
    width: 31px;
}
.bm-sep {
    margin: 0 13.500px 0 0;
}
.bm {
    display: flex;
    align-items: center;
    gap: 6px;
    padding-right: 17px;
    font-size: 12px;
    letter-spacing: -.25px;
    white-space: nowrap;
    color: #3d2c36;
}
.bm-folder {
    letter-spacing: -.7px;
}
.bm-long {
    width: 154px;
    padding-right: 0;
}
.bm-more {
    margin-left: auto;
    margin-right: 30px;
}

/* page */
.viewport {
    position: relative;
    display: flex;
    flex: 1;
    min-height: 0;
}
.page {
    position: relative;
    flex: 1;
    min-width: 0;
}
.site-header {
    height: 51.500px;
    padding-left: 200.500px;
    font-size: 20px;
    font-weight: 600;
    line-height: 53px;
    letter-spacing: -.7px;
    color: #fff;
    background: #5c6720;
    box-shadow: 0 1px 4px rgba(0, 0, 0, .25);
}
.login-grid {
    display: grid;
    grid-template-columns: 436px 412px;
    gap: 48px;
    align-items: center;
    width: 896px;
    margin: 144px auto 0;
}
.card {
    padding: 25px 24px 24px;
    border: 1px solid #e5e7eb;
    border-radius: 8px;
    background: #fff;
    box-shadow: 0 4px 10px rgba(0, 0, 0, .08);
}
.card h1 {
    margin: 0;
    font-size: 24px;
    font-weight: 700;
    line-height: 32px;
    letter-spacing: -1.200px;
    text-align: center;
}
.subtitle {
    margin: 5px 0 0;
    font-size: 14px;
    line-height: 20px;
    letter-spacing: -.45px;
    text-align: center;
    color: #6b7280;
}
.icon {
    width: 16px;
    height: 16px;
    flex: none;
    fill: none;
    stroke: currentColor;
    stroke-width: 2;
    stroke-linecap: round;
    stroke-linejoin: round;
}
.alert {
    display: flex;
    gap: 12px;
    height: 94px;
    margin-top: 24px;
    padding: 16px 16px 0;
    border: 1px solid #fca5a5;
    border-radius: 6px;
    color: #ef4444;
}
.alert .icon {
    margin-top: 1px;
}
.alert-title {
    font-size: 16px;
    font-weight: 500;
    line-height: 16px;
    letter-spacing: -.6px;
}
.alert-text {
    margin-top: 5px;
    font-size: 14px;
    line-height: 20px;
    letter-spacing: -.5px;
}
.field-label {
    display: block;
    margin: 19px 0 9px;
    font-size: 14px;
    font-weight: 500;
    line-height: 20px;
    letter-spacing: -.35px;
}
.field-gap {
    margin-top: 19px;
}
.input {
    display: flex;
    align-items: center;
    justify-content: space-between;
    height: 40px;
    padding: 0 11px 0 12px;
    border: 1px solid #e2e8f0;
    border-radius: 6px;
    font-size: 14px;
    letter-spacing: -.45px;
    background: #e8f0fe;
}
.eye {
    color: #6b7280;
    stroke-width: 1.800;
}
.remember {
    display: flex;
    align-items: center;
    gap: 8px;
    margin-top: 18px;
    font-size: 14px;
    line-height: 16px;
    letter-spacing: -.35px;
}
.checkbox {
    display: flex;
    width: 16px;
    height: 16px;
    border-radius: 3.500px;
    background: #5c6720;
}
.btn-primary {
    display: block;
    width: 100%;
    height: 40px;
    margin-top: 18px;
    border: 0;
    border-radius: 6px;
    font: 600 14px "Noto Sans", sans-serif;
    letter-spacing: -.35px;
    color: #fff;
    background: #5c6720;
}
.divider {
    height: 1px;
    margin: 16px 0;
    border: 0;
    background: #e5e7eb;
}
.btn-outline {
    display: flex;
    align-items: center;
    justify-content: center;
    width: 100%;
    height: 40px;
    padding: 0;
    border: 1px solid #e5e7eb;
    border-radius: 6px;
    font: 500 14px "Noto Sans", sans-serif;
    letter-spacing: -.2px;
    color: #0a0a0f;
    background: #fff;
}
.broom {
    margin: 0 8px 0 18px;
}
.hint {
    margin: 9px 0 0;
    font-size: 12px;
    line-height: 16px;
    letter-spacing: -.3px;
    text-align: center;
    color: #6b7280;
}
.links {
    width: 305px;
    margin: 23px auto 0;
}
.link-row {
    margin: 0;
    padding-bottom: 8px;
    font-size: 14px;
    line-height: 20px;
    letter-spacing: -.35px;
    white-space: nowrap;
    text-align: center;
}
.link-row a {
    color: #5c6720;
}
.link-muted {
    padding: 8px 0 0;
    border-top: 1px solid #e5e7eb;
    letter-spacing: -.4px;
    color: #6b7280;
}

.info {
    padding-top: 2px;
}
.info h2 {
    width: 300px;
    margin: 0 0 15px;
    font-size: 30px;
    font-weight: 700;
    line-height: 36px;
    letter-spacing: -1.050px;
    color: #5c6720;
    opacity: .92;
}
.info-lead {
    margin: 0 0 23px;
    font-size: 18px;
    line-height: 28px;
    letter-spacing: -.5px;
}
.features {
    display: flex;
    flex-direction: column;
    gap: 12px;
    margin: 0;
    padding: 0;
    list-style: none;
}
.features li {
    display: flex;
    align-items: center;
    gap: 8px;
    font-size: 16px;
    line-height: 26px;
    letter-spacing: -.48px;
}
.tick {
    display: flex;
    align-items: center;
    justify-content: center;
    width: 26px;
    height: 26px;
    border-radius: 50%;
    color: #5c6720;
    background: #eef0e8;
}
.info-note {
    margin: 25px 0 0;
    font-size: 14px;
    line-height: 20px;
    letter-spacing: -.43px;
    color: #6b7280;
}
.toast {
    position: absolute;
    right: 16px;
    bottom: 16px;
    width: 388px;
    height: 114px;
    padding: 25px 25px 0;
    border-radius: 6px;
    font-size: 14px;
    line-height: 20px;
    letter-spacing: -.5px;
    color: rgba(255, 255, 255, .92);
    background: #ef4444;
    box-shadow: 0 8px 14px rgba(0, 0, 0, .16);
}
.toast-title {
    margin-bottom: 5px;
    font-weight: 600;
    color: #fff;
}
.scrollbar {
    display: flex;
    flex-direction: column;
    align-items: center;
    width: 15px;
    padding-top: 5px;
    background: #fafafa;
}
.scroll-thumb {
    width: 11px;
    height: 737px;
    margin-top: 5px;
    border-radius: 2px;
    background: #868686;
}
.scroll-down {
    margin-top: auto;
    margin-bottom: 5px;
}

/* windows taskbar */
.taskbar {
    display: flex;
    align-items: center;
    height: 48px;
    flex: none;
    padding-bottom: 2px;
    border-top: 1px solid #b9b9b0;
    background: linear-gradient(90deg, #e9e7d6 0, #e6eae4 320px, #e2e8ee 520px, #eae7d3 680px, #e9e8d5 1400px, #e3e9e6 1600px, #e0e8ec 1920px);
}
.weather {
    display: flex;
    align-items: center;
    gap: 7px;
    width: 628px;
    padding-left: 18px;
    font-size: 11.500px;
    line-height: 16px;
    color: #1c1c1c;
}
.weather-sub {
    color: #4a4a4a;
}
.task-app {
    position: relative;
    display: flex;
    align-items: center;
    justify-content: center;
    width: 44px;
    height: 38px;
}
.task-search {
    display: flex;
    align-items: center;
    gap: 10px;
    width: 218px;
    height: 31px;
    margin: 0 2.500px 0 4px;
    padding-left: 10px;
    border: 1px solid #dcdcd0;
    border-radius: 16px;
    font-size: 13px;
    color: #555;
    background: #f7f7f0;
}
.task-active::before {
    content: "";
    position: absolute;
    left: 3px;
    top: 0;
    width: 38px;
    height: 38px;
    border-radius: 4px;
    background: #f4f3ea;
}
.task-active svg {
    position: relative;
}
.task-active::after {
    content: "";
    position: absolute;
    left: 14px;
    bottom: 0;
    width: 16px;
    height: 3px;
    border-radius: 2px;
    background: #555;
}
.task-open::after {
    content: "";
    position: absolute;
    left: 19px;
    bottom: -1px;
    width: 6px;
    height: 3px;
    border-radius: 2px;
    background: #888;
}
.tray {
    display: flex;
    align-items: center;
    margin-left: auto;
    padding-right: 19px;
}
.tray-item {
    display: flex;
    align-items: center;
    justify-content: center;
    width: 32px;
}
.tray-lang {
    width: 40px;
    margin-left: 2px;
    font-size: 12px;
    line-height: 17px;
    text-align: center;
}
.tray-net {
    width: 24px;
    margin-left: 6px;
}
.tray-vol {
    width: 22px;
}
.tray-clock {
    width: 77px;
    font-size: 12px;
    line-height: 16px;
    text-align: right;
}
```
